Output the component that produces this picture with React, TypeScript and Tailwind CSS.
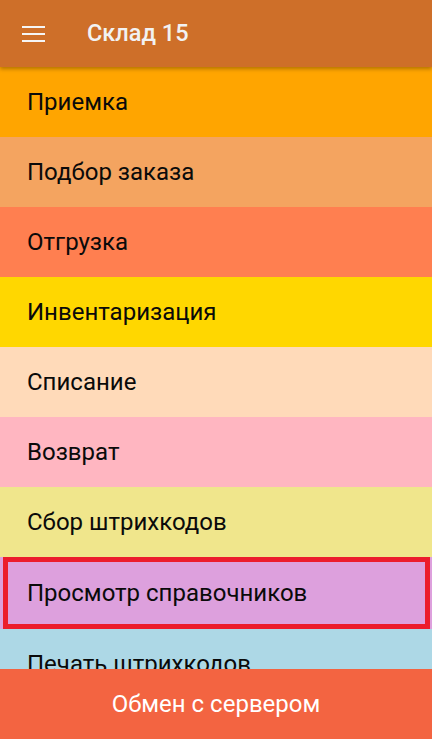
const ITEMS = [
  { label: 'Приемка', bg: 'bg-[#FFA500]', h: 'h-[70px]' },
  { label: 'Подбор заказа', bg: 'bg-[#F4A460]', h: 'h-[70px]' },
  { label: 'Отгрузка', bg: 'bg-[#FF7F50]', h: 'h-[70px]' },
  { label: 'Инвентаризация', bg: 'bg-[#FFD700]', h: 'h-[70px]' },
  { label: 'Списание', bg: 'bg-[#FFDAB9]', h: 'h-[70px]' },
  { label: 'Возврат', bg: 'bg-[#FFB6C1]', h: 'h-[70px]' },
  { label: 'Сбор штрихкодов', bg: 'bg-[#F0E68C]', h: 'h-[70px]' },
  { label: 'Просмотр справочников', bg: 'bg-[#DDA0DD]', h: 'h-[72px]', selected: true },
  { label: 'Печать штрихкодов', bg: 'bg-[#ADD8E6]', h: 'h-[70px]' },
];

export default function App() {
  return (
    <div className="relative w-[432px] h-[739px] overflow-hidden bg-white flex flex-col font-['Roboto',sans-serif]">
      {/* Toolbar */}
      <div className="relative z-10 h-[67px] shrink-0 bg-[#CE6F29] flex items-center shadow-[0_2px_4px_rgba(0,0,0,0.3)]">
        <div className="w-[87px] flex justify-start pl-[22px]">
          <div className="flex flex-col gap-[5px]">
            <div className="w-[23px] h-[2px] bg-[#f5f5f5]" />
            <div className="w-[23px] h-[2px] bg-[#f5f5f5]" />
            <div className="w-[23px] h-[2px] bg-[#f5f5f5]" />
          </div>
        </div>
        <span className="text-[23.5px] font-medium text-[#f2f2f2]">Склад 15</span>
      </div>

      {/* Menu */}
      <div className="flex-1 flex flex-col overflow-hidden">
        {ITEMS.map((item) => (
          <div key={item.label} className={`relative shrink-0 ${item.h} ${item.bg} flex items-center pl-[27px]`}>
            <span className="text-[24px] text-[#0a0a0a]">{item.label}</span>
            {item.selected && (
              <div className="absolute left-[3px] top-0 w-[427px] h-[72px] border-[5px] border-[#EC1C2C]" />
            )}
          </div>
        ))}
      </div>

      {/* Bottom action */}
      <div className="h-[70px] shrink-0 bg-[#F36441] flex items-center justify-center">
        <span className="text-[24px] text-white">Обмен с сервером</span>
      </div>
    </div>
  );
}
